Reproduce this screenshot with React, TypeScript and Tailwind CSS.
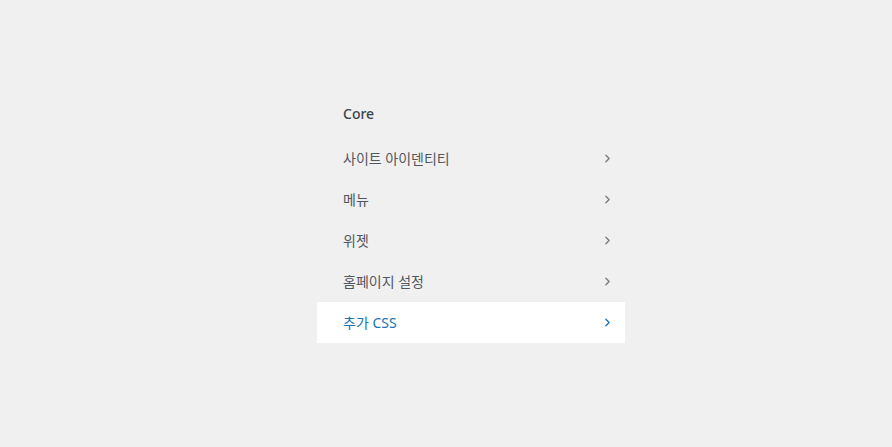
import { ChevronRight } from "lucide-react";

const items = [
  { label: "사이트 아이덴티티" },
  { label: "메뉴" },
  { label: "위젯" },
  { label: "홈페이지 설정" },
  { label: "추가 CSS", active: true },
];

export default function App() {
  return (
    <div
      className="min-h-screen w-full bg-[#f0f0f0] pt-[96px] pl-[317px]"
      style={{ fontFamily: '"Noto Sans", "Noto Sans CJK KR", sans-serif' }}
    >
      <div className="w-[308px] bg-[#f0f0f1]">
        <div className="h-[42px] pl-[26px] flex items-center pb-[7px] text-[14px] font-medium text-[#3c434a]">
          Core
        </div>
        <ul>
          {items.map((item) => (
            <li
              key={item.label}
              className={
                "h-[41px] pl-[26px] pr-[11px] flex items-center justify-between text-[14px] pb-[1px] " +
                (item.active ? "bg-white text-[#2271b1]" : "text-[#50575e]")
              }
            >
              <span>{item.label}</span>
              <ChevronRight
                className={"w-[13px] h-[13px] " + (item.active ? "text-[#2271b1]" : "text-[#787c82]")}
                strokeWidth={2.5}
              />
            </li>
          ))}
        </ul>
      </div>
    </div>
  );
}
